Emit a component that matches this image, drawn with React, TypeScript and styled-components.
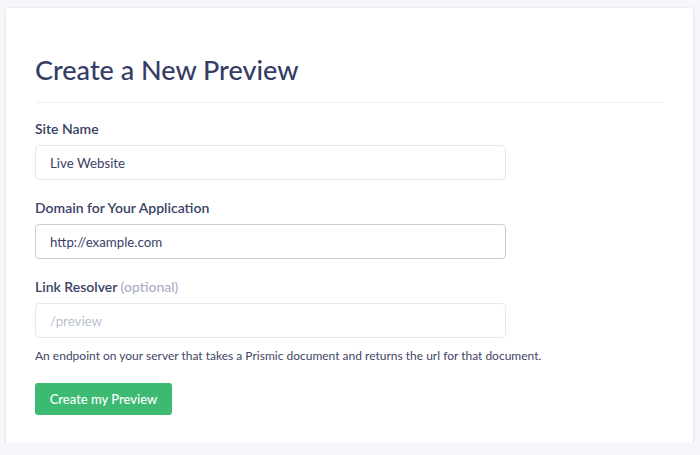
import styled, { createGlobalStyle } from "styled-components";

const GlobalStyle = createGlobalStyle`
  body {
    margin: 0;
    background: #f6f7fb;
    font-family: Lato, "Noto Sans", sans-serif;
    color: #373f63;
  }
`;

export default function App() {
  return (
    <>
      <GlobalStyle />
      <Page>
        <Card>
          <Title>Create a New Preview</Title>
          <Divider />
          <Field>
            <Label>Site Name</Label>
            <Input defaultValue="Live Website" />
          </Field>
          <Field>
            <Label>Domain for Your Application</Label>
            <Input defaultValue="http://example.com" $focused />
          </Field>
          <Field>
            <Label>
              Link Resolver <Optional>(optional)</Optional>
            </Label>
            <Input placeholder="/preview" />
            <Hint>
              An endpoint on your server that takes a Prismic document and
              returns the url for that document.
            </Hint>
          </Field>
          <Button>Create my Preview</Button>
        </Card>
      </Page>
    </>
  );
}

const Page = styled.div`
  padding: 8px 7px 0 6px;
`;

const Card = styled.div`
  background: #ffffff;
  height: 435px;
  box-sizing: border-box;
  padding: 44px 29px 0 29px;
  box-shadow: 0 1px 3px rgba(40, 50, 90, 0.12), 0 0 0 1px rgba(40, 50, 90, 0.03);
  border-radius: 2px;
`;

const Title = styled.h1`
  margin: 0;
  font-size: 27px;
  font-weight: 500;
  line-height: 36px;
  color: #353d66;
`;

const Divider = styled.div`
  height: 1px;
  background: #eef0f5;
  margin: 14px 0 16px;
`;

const Field = styled.div`
  display: flex;
  flex-direction: column;
  margin-bottom: 18px;
`;

const Label = styled.label`
  font-size: 14px;
  font-weight: 600;
  line-height: 20px;
  color: #3a4166;
  margin-bottom: 6px;
`;

const Optional = styled.span`
  color: #a8afc4;
  font-weight: 500;
`;

const Input = styled.input<{ $focused?: boolean }>`
  width: 471px;
  height: 35px;
  box-sizing: border-box;
  border: 1px solid ${(p) => (p.$focused ? "#c9ccd6" : "#e7e9f1")};
  border-radius: 4px;
  padding: 0 14px;
  font-family: inherit;
  font-size: 13.3px;
  color: #3a4166;
  outline: none;
  &::placeholder {
    color: #b9bfcf;
  }
`;

const Hint = styled.p`
  margin: 10px 0 0;
  font-size: 12px;
  line-height: 15px;
  color: #3f4666;
`;

const Button = styled.button`
  margin-top: 2px;
  width: 137px;
  height: 32px;
  border: none;
  border-radius: 3px;
  background: #3cba72;
  color: #ffffff;
  font-family: inherit;
  font-size: 13px;
  font-weight: 500;
`;
